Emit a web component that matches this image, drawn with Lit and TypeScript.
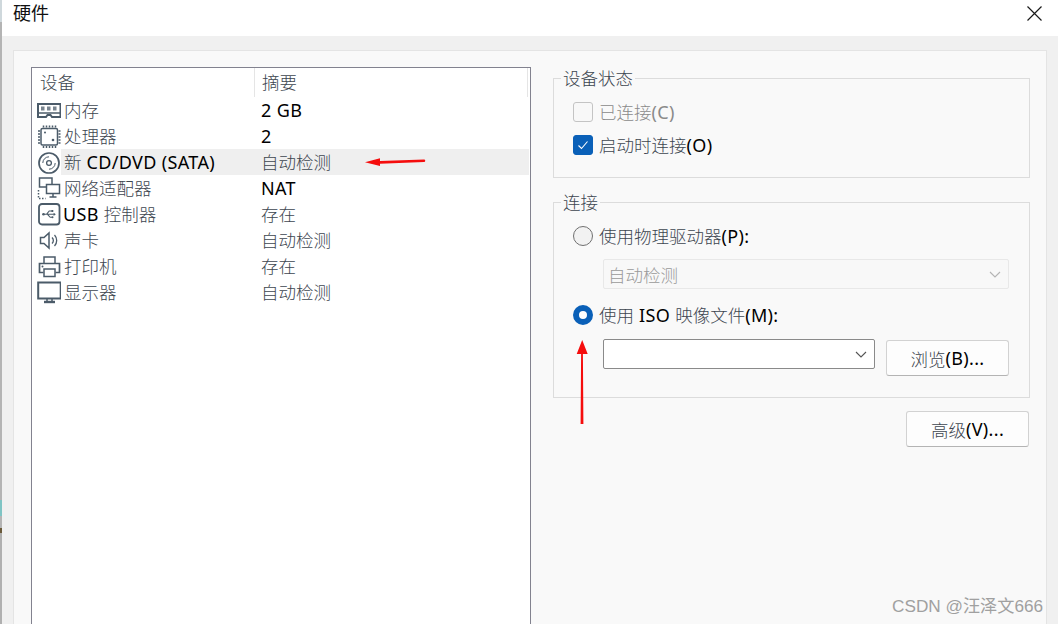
import { LitElement, html, css, svg } from "lit";
import { customElement } from "lit/decorators.js";

const cjk = (text: string) =>
  text.split(/([\u4e00-\u9fff]+)/).map((part, i) =>
    i % 2 ? html`<span class="c">${part}</span>` : part
  );

const S = "#4b5b69";
const icon = (body: unknown) =>
  html`<svg class="ic" viewBox="0 0 24 24" fill="none" stroke="${S}" stroke-width="1.5">${body}</svg>`;

const icons: Record<string, unknown> = {
  mem: icon(svg`
    <path d="M1 5.5h22.5v13H15l-1.5-2h-3L9 18.5H1z" stroke-width="2"/>
    <path d="M2 14.5h21" />
    <rect x="4" y="8" width="3.5" height="4" fill="${S}" stroke="none" opacity=".75"/>
    <rect x="10" y="8" width="3.5" height="4" fill="${S}" stroke="none" opacity=".75"/>
    <rect x="16" y="8" width="3.5" height="4" fill="${S}" stroke="none" opacity=".75"/>`),
  cpu: icon(svg`
    <rect x="4" y="4" width="16.5" height="16.5" rx="1.5"/>
    <path d="M6.5 1v2M9.5 1v2M12.5 1v2M15.5 1v2M18.5 1v2M6.5 21.5v2M9.5 21.5v2M12.5 21.5v2M15.5 21.5v2M18.5 21.5v2M1 6.5h2M1 9.5h2M1 12.5h2M1 15.5h2M1 18.5h2M21.5 6.5h2M21.5 9.5h2M21.5 12.5h2M21.5 15.5h2M21.5 18.5h2"/>
    <circle cx="8" cy="8" r="1" fill="${S}" stroke="none"/>
    <circle cx="16" cy="15.5" r="1.3" fill="${S}" stroke="none"/>`),
  cd: icon(svg`
    <circle cx="12" cy="12.5" r="10" stroke-width="1.7"/>
    <circle cx="12" cy="12.5" r="2.4" stroke-width="1.3"/>
    <path d="M5.8 12.5a6.2 6.2 0 0 1 6.2-6.2M18.2 12.5a6.2 6.2 0 0 1-6.2 6.2" stroke-width="1"/>`),
  net: icon(svg`
    <rect x="2.5" y="1.5" width="12.5" height="9"/>
    <rect x="9.5" y="8" width="13" height="9" fill="#fff"/>
    <path d="M16 17v3M12.5 20.5h7"/>
    <path d="M1.5 13.5v8.5h7" stroke-dasharray="1.5 1.5"/>`),
  usb: icon(svg`
    <rect x="2" y="1.5" width="20.5" height="20.5" rx="3" stroke-width="1.8"/>
    <path d="M6.5 11.8h11M9.5 11.8l2.7-3.3h2.3M10.5 11.8l2.7 3h2.3" stroke-width="1.1"/>
    <circle cx="6.5" cy="11.8" r="1.3" fill="${S}" stroke="none"/>
    <path d="M18.8 11.8l-2.2-1.6v3.2z" fill="${S}" stroke="none"/>
    <rect x="14.3" y="7.5" width="2" height="2" fill="${S}" stroke="none"/>
    <circle cx="15.5" cy="14.8" r="1" fill="${S}" stroke="none"/>`),
  sound: icon(svg`
    <path d="M3.5 9h3.5l5-4.5v15l-5-4.5H3.5z"/>
    <path d="M15 9a4 4 0 0 1 0 6M17.5 6.5a8 8 0 0 1 0 11" stroke-width="1.3"/>`),
  print: icon(svg`
    <path d="M7 9V2.5h11V9" />
    <path d="M6.5 18H2.5v-9h20v9h-4" stroke-width="1.7"/>
    <rect x="7" y="14.5" width="11" height="7.5"/>
    <circle cx="5.5" cy="12" r="1" fill="${S}" stroke="none"/>`),
  mon: icon(svg`
    <rect x="1.2" y="2" width="22.5" height="16" stroke-width="2"/>
    <path d="M7 21.5h11" stroke-width="2.4"/>
    <path d="M10 18v3M15 18v3" stroke-width="1.5"/>`),
};

const rows = [
  ["mem", "内存", "2 GB", false],
  ["cpu", "处理器", "2", false],
  ["cd", "新 CD/DVD (SATA)", "自动检测", true],
  ["net", "网络适配器", "NAT", false],
  ["usb", "USB 控制器", "存在", false],
  ["sound", "声卡", "自动检测", false],
  ["print", "打印机", "存在", false],
  ["mon", "显示器", "自动检测", false],
] as const;

const chevron = html`<svg class="chev" viewBox="0 0 12 7" fill="none" stroke="currentColor" stroke-width="1.1"><path d="M1 1l5 5 5-5"/></svg>`;

@customElement("app-root")
export class AppRoot extends LitElement {
  static styles = css`
    :host {
      display: grid;
      grid-template-columns: 2px 1fr;
      width: 1058px;
      height: 624px;
      overflow: hidden;
      position: relative;
      font-family: "Noto Sans", "Noto Sans CJK SC", sans-serif;
      font-size: 18px;
      letter-spacing: 0.35px;
      color: #000;
      background: #fff;
    }
    .edge {
      background: linear-gradient(#cfd8dc 0 22px, #b4b4b4 22px 500px, #7fc4c4 500px 516px, #b4b4b4 516px 528px, #6a5a3a 528px 533px, #b0b0b0 533px);
    }
    .main { display: flex; flex-direction: column; min-width: 0; height: 624px; }
    .title {
      height: 36px;
      flex: none;
      background: #fff;
      display: flex;
      align-items: center;
      justify-content: space-between;
      padding: 0 16px 12px 11px;
      box-sizing: border-box;
    }
    .title .c { font-size: 18px; color: #111; font-weight: 400; }
    .title svg { width: 15px; height: 15px; margin-top: 3px; }
    .body {
      flex: 1;
      min-height: 0;
      background: #f0f0f0;
      padding: 14px 12px 0 11px;
      display: flex;
    }
    .panel {
      flex: 1;
      background: #f9f9f9;
      border: 1px solid #e4e4e4;
      border-bottom: none;
      padding: 16px 16px 0 17px;
      display: grid;
      grid-template-columns: 500px 477px;
      column-gap: 22px;
      min-height: 0;
    }
    .c { color: #3d4650; font-weight: 300; font-size: 17.5px; letter-spacing: 0; }
    .list {
      background: #fff;
      border: 1px solid #82828f;
      border-bottom: none;
      box-sizing: border-box;
    }
    .head, .row {
      display: grid;
      grid-template-columns: 29px 193px 1fr;
      margin-right: 1px;
      align-items: center;
      white-space: nowrap;
    }
    .head { grid-template-columns: 222px 274px 1fr; height: 29px; }
    .head > div { height: 29px; line-height: 29px; box-sizing: border-box; }
    .head .h1 { padding-left: 8px; }
    .head .h2 { padding-left: 7px; border-left: 1px solid #e5e5e5; border-right: 1px solid #e5e5e5; }
    .row { height: 26px; line-height: 26px; }
    .row .name { height: 26px; padding-left: 3px; }
    .row .sum { height: 26px; padding-left: 7px; }
    .row.sel .name, .row.sel .sum { background: #efefef; }
    .row .iccell { display: flex; padding-left: 5px; }
    .row.usb .name { padding-left: 2px; }
    .ic { width: 25px; height: 25px; display: block; }
    .right { display: flex; flex-direction: column; align-items: stretch; min-width: 0; }
    fieldset {
      margin: 0;
      border: 1px solid #dcdcdc;
      padding: 6px 19px 16px 19px;
      min-width: 0;
    }
    legend { padding: 0 2px; margin-left: -12px; line-height: 22px; }
    .g2 { margin-top: 13px; padding: 0 20px 21px 19px; }
    .opt {
      display: flex;
      align-items: center;
      height: 33px;
      gap: 6px;
      white-space: nowrap;
    }
    .off, .off .c { color: #8a8a8a; }
    .box {
      width: 20px; height: 20px; box-sizing: border-box; border-radius: 3px; flex: none;
      border: 1px solid #c4c4c4; background: #f8f8f8;
      display: flex; align-items: center; justify-content: center;
    }
    .box.on { background: #0a60b8; border-color: #0a60b8; }
    .box svg { width: 12px; height: 12px; }
    .radio {
      width: 20px; height: 20px; box-sizing: border-box; border-radius: 50%; flex: none;
      border: 1px solid #707070; background: #f2f2f2;
    }
    .radio.on { border: 6px solid #0a60b8; background: #fff; }
    .select {
      margin-left: 30px;
      box-sizing: border-box;
      display: flex;
      align-items: center;
      justify-content: space-between;
      height: 30px;
      padding: 0 7px 0 4px;
      border: 1px solid #e8e8e8;
      border-radius: 2px;
      background: #f8f8f8;
      color: #9a9a9a;
    }
    .select .c { color: #9a9a9a; }
    .chev { width: 12px; height: 7px; color: #b4b4b4; }
    .p1 { margin-top: 6px; }
    .p3 { margin-top: 7px; }
    .p4 { margin-top: 9px; }
    .browse-row { display: flex; gap: 11px; align-items: flex-start; margin-left: 30px; margin-top: 8px; }
    .combo {
      width: 272px; height: 30px; box-sizing: border-box;
      border: 1px solid #8a8a8a; border-radius: 2px; background: #fff;
      display: flex; align-items: center; justify-content: flex-end; padding-right: 7px;
    }
    .combo .chev { color: #555; }
    .btn {
      box-sizing: border-box;
      display: flex; align-items: center; justify-content: center;
      background: #fdfdfd;
      border: 1px solid #d2d2d2;
      border-bottom-color: #b4b4b4;
      border-radius: 3px;
      white-space: nowrap;
      height: 36px;
      width: 123px;
    }
    .browse-row .btn { margin-top: 1px; }
    .adv { align-self: flex-end; margin-top: 13px; margin-right: 1px; }
    .arrows { position: absolute; left: 0; top: 0; width: 1058px; height: 624px; pointer-events: none; }
    .mark { position: absolute; left: 892px; top: 595px; color: #a0a0a0; letter-spacing: 0; font-family: "Liberation Sans", "Noto Sans CJK SC", sans-serif; font-size: 17.2px; line-height: 22px; white-space: nowrap; }
  `;

  render() {
    return html`
      <div class="edge"></div>
      <div class="main">
        <div class="title">
          <span>${cjk("硬件")}</span>
          <svg viewBox="0 0 15 15" fill="none" stroke="#1a1a1a" stroke-width="1.2"><path d="M.5.5l14 14M14.5.5l-14 14"/></svg>
        </div>
        <div class="body">
          <div class="panel">
            <div class="list">
              <div class="head">
                <div class="h1">${cjk("设备")}</div>
                <div class="h2">${cjk("摘要")}</div>
              </div>
              ${rows.map(
                ([ic, name, sum, sel]) => html`
                  <div class="row ${sel ? "sel" : ""} ${ic}">
                    <div class="iccell">${icons[ic]}</div>
                    <div class="name">${cjk(name)}</div>
                    <div class="sum">${cjk(sum)}</div>
                  </div>`
              )}
            </div>
            <div class="right">
              <fieldset>
                <legend>${cjk("设备状态")}</legend>
                <div class="opt off"><span class="box"></span><span>${cjk("已连接(C)")}</span></div>
                <div class="opt">
                  <span class="box on"><svg viewBox="0 0 12 12" fill="none" stroke="#fff" stroke-width="1.1"><path d="M1.5 6.5l3 3 6-7"/></svg></span>
                  <span>${cjk("启动时连接(O)")}</span>
                </div>
              </fieldset>
              <fieldset class="g2">
                <legend>${cjk("连接")}</legend>
                <div class="opt p1"><span class="radio"></span><span>${cjk("使用物理驱动器(P):")}</span></div>
                <div class="select p3"><span>${cjk("自动检测")}</span>${chevron}</div>
                <div class="opt p4"><span class="radio on"></span><span>${cjk("使用 ISO 映像文件(M):")}</span></div>
                <div class="browse-row">
                  <div class="combo">${chevron}</div>
                  <div class="btn">${cjk("浏览(B)...")}</div>
                </div>
              </fieldset>
              <div class="btn adv">${cjk("高级(V)...")}</div>
            </div>
          </div>
        </div>
      </div>
      <svg class="arrows" viewBox="0 0 1058 624" fill="#f50d0d" stroke="none">
        <path d="M424 159.5l-44 1.4v-2.6l-15 4 15 3.8v-2.4l44-1.7a1 1 0 0 0 0-2.5z"/>
        <path d="M580.6 424h2.8l-.5-70h4.8l-5.5-14-5.5 14h4.4z"/>
      </svg>
      <div class="mark">CSDN @汪泽文666</div>
    `;
  }
}
